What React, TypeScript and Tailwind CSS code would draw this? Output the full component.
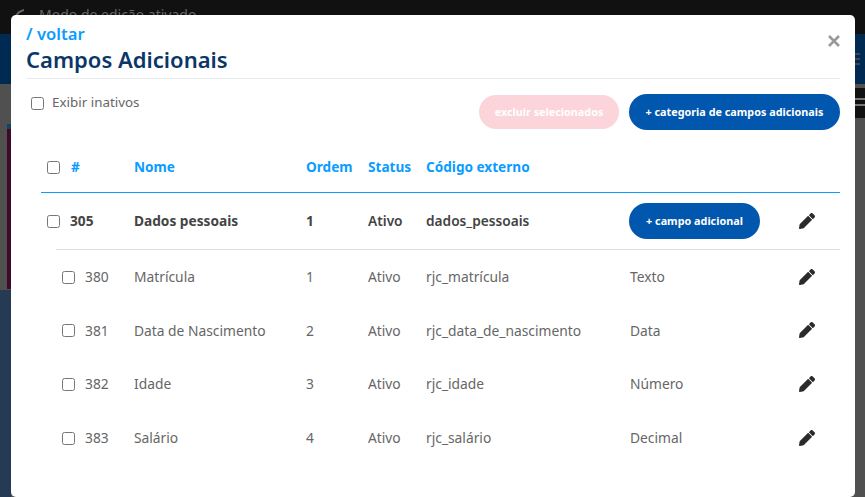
type Campo = { id: number; nome: string; ordem: number; codigo: string; tipo: string };

const campos: Campo[] = [
  { id: 380, nome: 'Matrícula', ordem: 1, codigo: 'rjc_matrícula', tipo: 'Texto' },
  { id: 381, nome: 'Data de Nascimento', ordem: 2, codigo: 'rjc_data_de_nascimento', tipo: 'Data' },
  { id: 382, nome: 'Idade', ordem: 3, codigo: 'rjc_idade', tipo: 'Número' },
  { id: 383, nome: 'Salário', ordem: 4, codigo: 'rjc_salário', tipo: 'Decimal' },
];

function Box() {
  return <span className="block w-[13px] h-[13px] rounded-[2.5px] border border-[#767676] bg-white shrink-0" />;
}

function Lapis() {
  return (
    <svg viewBox="0 0 512 512" className="block w-[16px] h-[16px] fill-[#2b2b2b]">
      <path d="M497.9 142.1l-46.1 46.1c-4.7 4.7-12.3 4.7-17 0l-111-111c-4.7-4.7-4.7-12.3 0-17l46.1-46.1c18.7-18.7 49.1-18.7 67.9 0l60.1 60.1c18.8 18.7 18.8 49.1 0 67.9zM284.2 99.8L21.6 362.4.4 483.9c-2.9 16.4 11.4 30.6 27.8 27.8l121.5-21.3 262.6-262.6c4.7-4.7 4.7-12.3 0-17l-111-111c-4.8-4.7-12.4-4.7-17.1 0z" />
    </svg>
  );
}

export default function App() {
  return (
    <div className="relative w-[865px] h-[497px] overflow-hidden flex flex-col bg-[#505050] font-['Noto_Sans',sans-serif]">
      {/* Page behind the modal */}
      <div className="h-[34px] bg-[#111] shrink-0 flex items-start pl-[15px] pt-[7px] text-[14px] leading-[16px] text-[#666]">
        <svg viewBox="0 0 10 10" className="w-[10px] h-[10px] mt-[2px] fill-none stroke-[#666] stroke-2">
          <path d="M1 8C2 4 5 2 9 1" />
        </svg>
        <span className="ml-[14px]">Modo de edição ativado</span>
      </div>
      <div className="h-[50px] bg-[#002a52] shrink-0 flex justify-end items-center pr-[5px]">
        <div className="w-[5px] h-[12px] border-y-2 border-[#445] flex items-center">
          <div className="w-full h-[2px] bg-[#445]" />
        </div>
      </div>
      <div className="flex-1 flex justify-between">
        <div className="w-[11px] flex flex-col">
          <div className="h-[206px] bg-[#505050] pl-[7px] pt-[40px]">
            <div className="h-[5px] bg-[#0e4763]" />
            <div className="h-[160px] bg-[#3f0a2a]" />
          </div>
          <div className="flex-1 bg-[#243b53]" />
        </div>
        <div className="w-[10px] flex flex-col">
          <div className="h-[4px]" />
          <div className="h-[30px] bg-[#111] flex flex-col gap-[4px] pt-[10px]">
            <div className="h-[2px] bg-[#777]" />
            <div className="h-[2px] bg-[#777]" />
          </div>
        </div>
      </div>

      {/* Modal */}
      <div className="absolute left-[11px] top-[15px] w-[844px] h-[482px] bg-white rounded-[5px] flex flex-col px-[15px]">
        <div className="h-[64px] border-b border-[#e9ecef] relative shrink-0">
          <div className="text-[16.6px] leading-[22px] tracking-[0.01px] font-semibold text-[#0a9cff] pt-[8px]">/ voltar</div>
          <div className="text-[22px] leading-[28px] tracking-[0.01px] font-semibold text-[#0b3768]">Campos Adicionais</div>
          <svg viewBox="0 0 12 12" className="absolute right-0 top-[20px] w-[12px] h-[12px] stroke-[#999] stroke-[2.6]">
            <path d="M1 1L11 11M11 1L1 11" />
          </svg>
        </div>
        <div className="flex justify-between pl-[5px] h-[66px] shrink-0">
          <label className="flex items-center gap-[8px] h-[20px] mt-[14px] text-[13.4px] text-[#666]"><Box /><span className="pb-[2px]">Exibir inativos</span></label>
          <div className="flex gap-[10px] items-start mt-[15px]">
            <button className="h-[34px] w-[140px] mt-[1px] rounded-full bg-[#fbd5da] text-white text-[10.8px] tracking-[0.01px] font-bold">excluir selecionados</button>
            <button className="h-[36px] w-[211px] rounded-full bg-[#0157ad] text-white text-[10.8px] tracking-[0.01px] font-bold">+ categoria de campos adicionais</button>
          </div>
        </div>
        <div className="ml-[15px] flex flex-col">
          <div className="h-[48px] flex items-center border-b border-[#0a9cff] text-[13.6px] font-bold text-[#0a9cff] pl-[6px] pb-[2px] shrink-0">
            <span className="w-[24px]"><Box /></span>
            <span className="w-[63px]">#</span>
            <span className="w-[172px]">Nome</span>
            <span className="w-[62px]">Ordem</span>
            <span className="w-[58px]">Status</span>
            <span>Código externo</span>
          </div>
          <div className="h-[56px] flex items-center text-[13.7px] font-bold text-[#444] pl-[6px] shrink-0">
            <span className="w-[23px]"><Box /></span>
            <span className="w-[64px]">305</span>
            <span className="w-[172px]">Dados pessoais</span>
            <span className="w-[62px]">1</span>
            <span className="w-[58px] font-semibold">Ativo</span>
            <span className="w-[203px] font-semibold">dados_pessoais</span>
            <button className="h-[36px] w-[131px] rounded-full bg-[#0157ad] text-white text-[10.8px] tracking-[0.01px] font-bold">+ campo adicional</button>
            <span className="ml-[39px]"><Lapis /></span>
          </div>
          {campos.map((c, i) => (
            <div key={c.id} className={`flex items-center text-[13.8px] text-[#666] ml-[15px] pl-[6px] pt-[1px] shrink-0 ${i === 0 ? 'h-[54.67px] border-t border-[#ddd]' : 'h-[53.67px]'}`}>
              <span className="w-[23px]"><Box /></span>
              <span className="w-[49px]">{c.id}</span>
              <span className="w-[172px]">{c.nome}</span>
              <span className="w-[62px]">{c.ordem}</span>
              <span className="w-[58px]">Ativo</span>
              <span className="w-[204px]">{c.codigo}</span>
              <span className="w-[169px]">{c.tipo}</span>
              <span className="-mt-[1px]"><Lapis /></span>
            </div>
          ))}
        </div>
      </div>
    </div>
  );
}
